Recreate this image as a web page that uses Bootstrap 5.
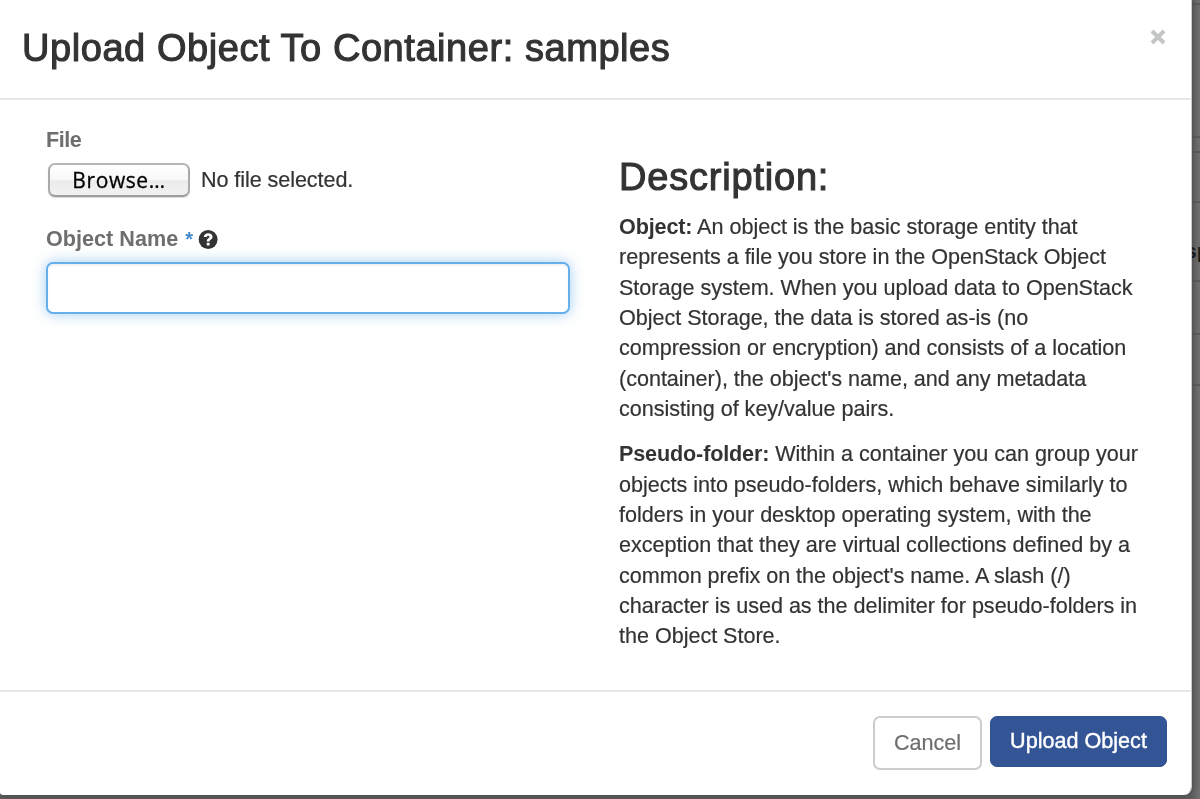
<!DOCTYPE html>
<html lang="en">
<head>
<meta charset="utf-8">
<meta name="viewport" content="width=device-width, initial-scale=1">
<title>Upload Object To Container: samples</title>
<link rel="stylesheet" href="https://cdn.jsdelivr.net/npm/bootstrap@5.3.0/dist/css/bootstrap.min.css">
<style>
  body { font-family: "Liberation Sans", Arial, sans-serif; font-size: 21.6px; line-height: 30.35px; color: #333; background: #5c5c5c; height: 799px; overflow: hidden; }
  .page-behind { width: 9px; z-index: 0; background: linear-gradient(90deg, #5e5e5e 0, #707070 9px); }
  .page-behind div { border-bottom: 2px solid #5a5a5a; flex: none; }
  .behind-label { color: #1c1c1c; font-weight: 700; line-height: 24px; font-size: 21px; padding-top: 19px; }
  .behind-label span { margin-left: -6px; }
  .dialog { width: 1192px; height: 795px; z-index: 1; border: 0; border-right: 1px solid #ccc; border-radius: 0 0 8px 3px; box-shadow: 0 0 7px rgba(0,0,0,.25); }
  .dialog-head { height: 100px; border-bottom: 2px solid #e7e7e7; padding: 0 25px 0 22px; }
  .dialog-title { font-size: 38px; line-height: 42px; letter-spacing: .56px; -webkit-text-stroke: 1.1px #333; margin-top: 27px; }
  .dismiss { margin-top: 29px; line-height: 0; }
  .dialog-body { height: 590px; padding: 25px 46px 0; }
  .form-col { width: 524px; margin-right: 49px; }
  .field-label { color: #6e6e6e; font-weight: 700; line-height: 30px; letter-spacing: .02px; }
  .file-word { letter-spacing: -.5px; }
  .required-mark { color: #428bca; font-weight: 700; font-size: 20px; margin-left: 7px; }
  .browse { width: 142px; height: 34px; margin-left: 2px; border: 2px solid #aaa; border-color: #b5b5b5 #aaa #9d9d9d; border-radius: 7px; background: linear-gradient(#fff 0, #f8f8f8 48%, #ececec 52%, #f1f1f1 100%); color: #000; font-family: "Open Sans", sans-serif; font-size: 21px; line-height: 28px; letter-spacing: .6px; -webkit-text-stroke: .3px #000; box-shadow: 0 1px 1px rgba(0,0,0,.15); }
  .file-status { margin-left: 11px; letter-spacing: -.08px; -webkit-text-stroke: .2px #333; }
  .name-label { margin-top: 27px; }
  .name-input, .name-input:focus { height: 52px; border: 2px solid #66afe9; border-radius: 7px; box-shadow: inset 0 2px 2px rgba(0,0,0,.06), 0 0 14px rgba(102,175,233,.6); }
  .desc-title { font-size: 38px; line-height: 42px; letter-spacing: .8px; -webkit-text-stroke: 1.1px #333; margin: 31px 0 14px; }
  .desc p { margin: 0 0 15px; letter-spacing: -.03px; -webkit-text-stroke: .2px #333; }
  .desc p span { display: block; white-space: nowrap; }
  .desc b { letter-spacing: -.15px; -webkit-text-stroke: 0; }
  .dialog-foot { height: 105px; border-top: 2px solid #e7e7e7; padding: 24px 24px 0; gap: 8px; }
  .act { font-size: 21.6px; border-radius: 7px; padding: 0; }
  .act-cancel { width: 109px; height: 54px; border: 2px solid #ccc; color: #6e6e6e; background: #fff; -webkit-text-stroke: .2px #6e6e6e; }
  .act-upload { width: 177px; height: 51px; border: 1px solid #2f5292; color: #fff; background: #335595; -webkit-text-stroke: .4px #fff; }
</style>
</head>
<body>
<div class="page-behind position-fixed top-0 end-0 bottom-0 d-flex flex-column overflow-hidden" aria-hidden="true">
  <div style="height:5px"></div><div style="height:133px"></div><div style="height:15px"></div><div style="height:50px"></div>
  <div style="height:79px" class="behind-label d-flex align-items-center"><span>sp</span></div>
  <div style="height:53px"></div><div style="height:51px"></div>
</div>
<div class="dialog modal-content position-relative bg-white" role="dialog" aria-labelledby="title">
  <div class="dialog-head d-flex justify-content-between align-items-start">
    <h1 class="dialog-title mb-0" id="title">Upload Object To Container: samples</h1>
    <button class="dismiss btn p-0 border-0" aria-label="Close"><svg width="16" height="16" viewBox="0 0 16 16"><path d="M2 2 14 14M14 2 2 14" stroke="#c4c6c6" stroke-width="4"/></svg></button>
  </div>
  <div class="dialog-body d-flex align-items-start">
    <form class="form-col flex-shrink-0">
      <div class="field-label file-word">File</div>
      <div class="d-flex align-items-center mt-2">
        <button type="button" class="browse p-0">Browse…</button><span class="file-status">No file selected.</span>
      </div>
      <label for="name" class="field-label name-label d-flex align-items-center mb-2"><span>Object Name</span><span class="required-mark">*</span>
        <svg class="ms-1" width="21" height="21" viewBox="0 0 20 20"><circle cx="10.6" cy="10" r="9" fill="#333"/><path transform="translate(.6)" d="M5.9 7.5C6.1 5.2 7.8 4 10.1 4c2.4 0 4.1 1.2 4.1 3.3 0 2.8-2.8 2.5-2.8 4.5H8.7c0-3.2 2.5-3 2.5-4.3 0-.7-.5-1-1.1-1-.8 0-1.3.4-1.4 1.2zM8.7 13h2.7v2.7H8.7z" fill="#fff"/></svg>
      </label>
      <input id="name" type="text" class="name-input form-control">
    </form>
    <section class="desc">
      <h2 class="desc-title">Description:</h2>
      <p><span><b>Object:</b> An object is the basic storage entity that</span><span>represents a file you store in the OpenStack Object</span><span>Storage system. When you upload data to OpenStack</span><span>Object Storage, the data is stored as-is (no</span><span>compression or encryption) and consists of a location</span><span>(container), the object's name, and any metadata</span><span>consisting of key/value pairs.</span></p>
      <p><span><b>Pseudo-folder:</b> Within a container you can group your</span><span>objects into pseudo-folders, which behave similarly to</span><span>folders in your desktop operating system, with the</span><span>exception that they are virtual collections defined by a</span><span>common prefix on the object's name. A slash (/)</span><span>character is used as the delimiter for pseudo-folders in</span><span>the Object Store.</span></p>
    </section>
  </div>
  <div class="dialog-foot d-flex justify-content-end align-items-start">
    <button class="act act-cancel btn">Cancel</button>
    <button class="act act-upload btn">Upload Object</button>
  </div>
</div>
<script src="https://cdn.jsdelivr.net/npm/bootstrap@5.3.0/dist/js/bootstrap.bundle.min.js"></script>
</body>
</html>
